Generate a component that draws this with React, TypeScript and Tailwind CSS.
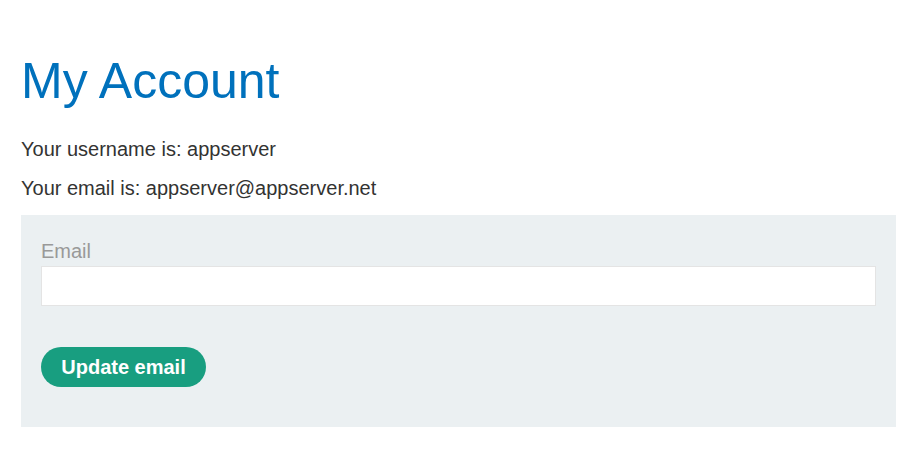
import React from "react";

export default function App() {
  return (
    <div
      className="min-h-[474px] bg-white pl-[21px] pr-[19px] pt-[56px]"
      style={{ fontFamily: '"Liberation Sans", Arial, sans-serif' }}
    >
      <h1 className="text-[50px] leading-[50px] text-[#0071bc] font-normal">My Account</h1>
      <p className="mt-[33px] text-[20px] leading-[20px] text-[#333332]">Your username is: appserver</p>
      <p className="mt-[19px] text-[20px] leading-[20px] text-[#333332]">Your email is: appserver@appserver.net</p>
      <form className="mt-[17px] bg-[#ebf0f2] px-[20px] pt-[26px] pb-[40px]">
        <label className="block text-[20px] leading-[20px] text-[#999999]">Email</label>
        <input
          type="email"
          className="mt-[5px] block h-[40px] w-full border border-[#e4e4e4] bg-white outline-none"
        />
        <button
          type="button"
          className="mt-[41px] flex h-[40px] w-[165px] items-center justify-center rounded-full bg-[#189e80] text-[20px] font-bold text-white"
        >
          Update email
        </button>
      </form>
    </div>
  );
}
